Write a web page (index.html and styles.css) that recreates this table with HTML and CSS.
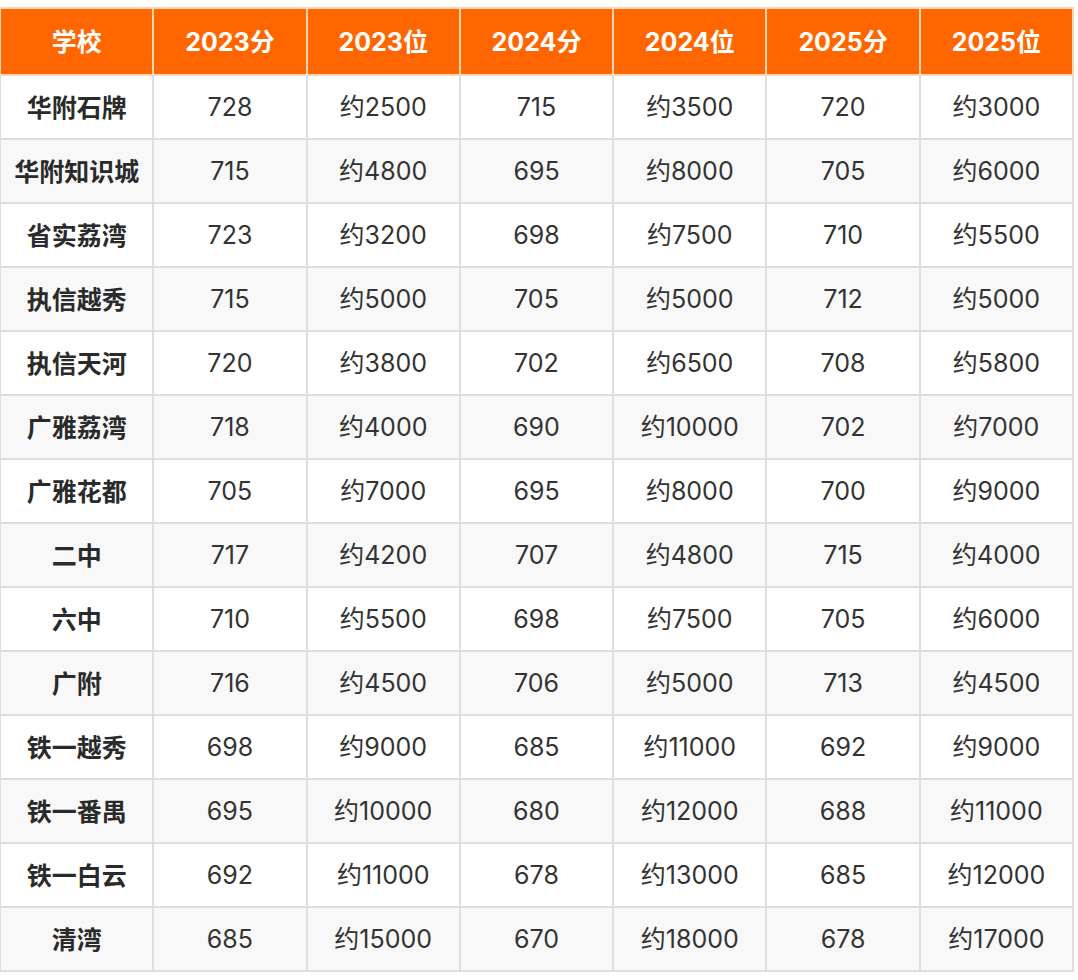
FILE: index.html
```html
<!DOCTYPE html>
<html lang="zh">
<head>
<meta charset="utf-8">
<link rel="stylesheet" href="styles.css">
</head>
<body>
<table class="score-table">
<thead>
<tr><th>学校</th><th>2023分</th><th>2023位</th><th>2024分</th><th>2024位</th><th>2025分</th><th>2025位</th></tr>
</thead>
<tbody>
<tr><td class="name">华附石牌</td><td>728</td><td>约2500</td><td>715</td><td>约3500</td><td>720</td><td>约3000</td></tr>
<tr><td class="name">华附知识城</td><td>715</td><td>约4800</td><td>695</td><td>约8000</td><td>705</td><td>约6000</td></tr>
<tr><td class="name">省实荔湾</td><td>723</td><td>约3200</td><td>698</td><td>约7500</td><td>710</td><td>约5500</td></tr>
<tr><td class="name">执信越秀</td><td>715</td><td>约5000</td><td>705</td><td>约5000</td><td>712</td><td>约5000</td></tr>
<tr><td class="name">执信天河</td><td>720</td><td>约3800</td><td>702</td><td>约6500</td><td>708</td><td>约5800</td></tr>
<tr><td class="name">广雅荔湾</td><td>718</td><td>约4000</td><td>690</td><td>约10000</td><td>702</td><td>约7000</td></tr>
<tr><td class="name">广雅花都</td><td>705</td><td>约7000</td><td>695</td><td>约8000</td><td>700</td><td>约9000</td></tr>
<tr><td class="name">二中</td><td>717</td><td>约4200</td><td>707</td><td>约4800</td><td>715</td><td>约4000</td></tr>
<tr><td class="name">六中</td><td>710</td><td>约5500</td><td>698</td><td>约7500</td><td>705</td><td>约6000</td></tr>
<tr><td class="name">广附</td><td>716</td><td>约4500</td><td>706</td><td>约5000</td><td>713</td><td>约4500</td></tr>
<tr><td class="name">铁一越秀</td><td>698</td><td>约9000</td><td>685</td><td>约11000</td><td>692</td><td>约9000</td></tr>
<tr><td class="name">铁一番禺</td><td>695</td><td>约10000</td><td>680</td><td>约12000</td><td>688</td><td>约11000</td></tr>
<tr><td class="name">铁一白云</td><td>692</td><td>约11000</td><td>678</td><td>约13000</td><td>685</td><td>约12000</td></tr>
<tr><td class="name">清湾</td><td>685</td><td>约15000</td><td>670</td><td>约18000</td><td>678</td><td>约17000</td></tr>
</tbody>
</table>
</body>
</html>
```
FILE: styles.css
```css
html, body {
  margin: 0;
  padding: 0;
  background: #ffffff;
}
body {
  padding-top: 7px;
  font-family: Inter, "Noto Sans CJK SC", sans-serif;
}
.score-table {
  border-collapse: collapse;
  table-layout: fixed;
  width: 1075px;
  margin-left: -1px;
}
.score-table th {
  background: #ff6600;
  color: #ffffff;
  font-weight: 700;
  font-size: 25px;
  line-height: 30px;
  height: 65px;
  padding: 0;
  border: 2px solid #fdd6b4;
  text-align: center;
  vertical-align: middle;
}
.score-table td {
  height: 62px;
  padding: 0;
  border: 2px solid #dedede;
  text-align: center;
  vertical-align: middle;
  font-size: 25px;
  line-height: 30px;
  color: #333333;
}
.score-table td.name {
  font-weight: 700;
  font-size: 25px;
  font-family: "Noto Sans CJK SC", sans-serif;
  color: #2a2a2a;
  height: 59px;
  padding-bottom: 3px;
}
.score-table tbody tr:nth-child(even) td {
  background: #f8f8f8;
}
```
